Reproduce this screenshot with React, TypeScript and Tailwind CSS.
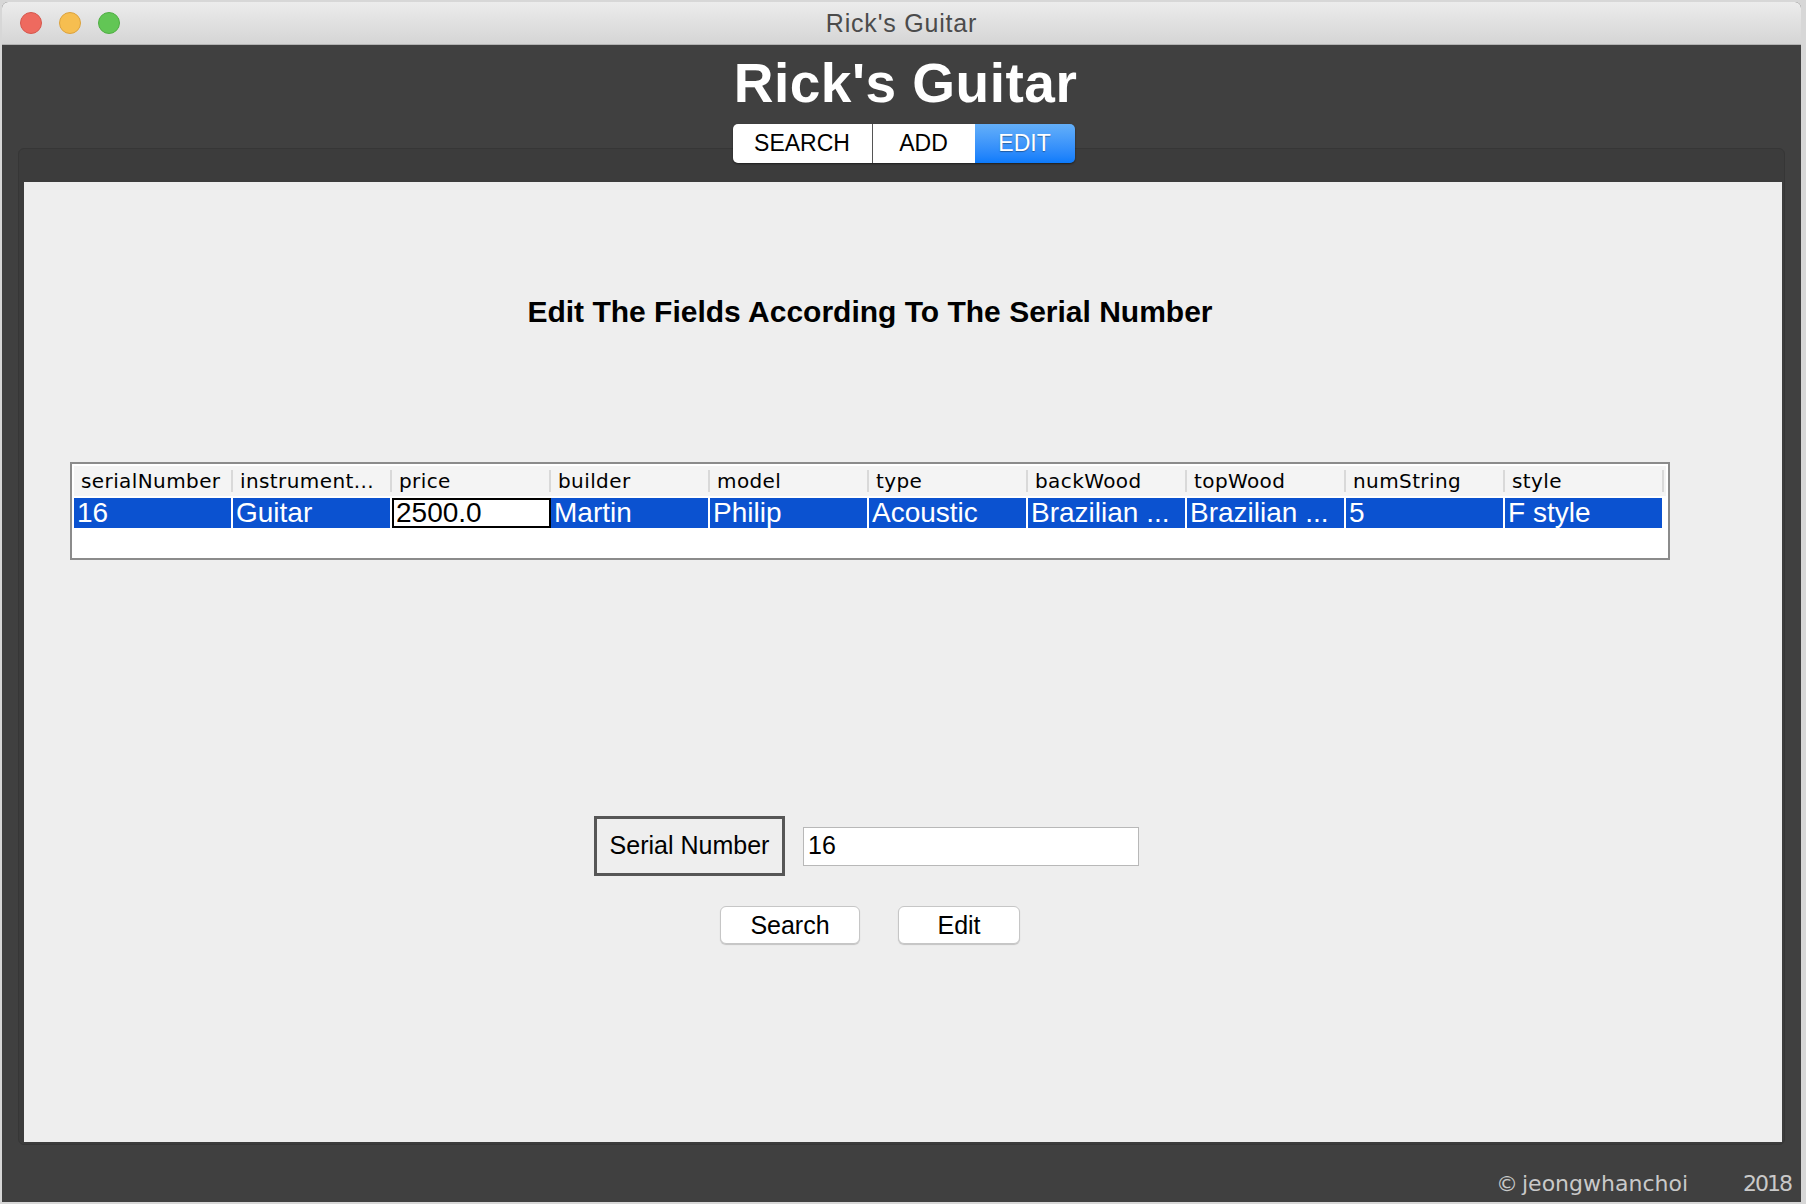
import React from "react";

const columns = [
  "serialNumber",
  "instrument...",
  "price",
  "builder",
  "model",
  "type",
  "backWood",
  "topWood",
  "numString",
  "style",
];

const row = [
  "16",
  "Guitar",
  "2500.0",
  "Martin",
  "Philip",
  "Acoustic",
  "Brazilian ...",
  "Brazilian ...",
  "5",
  "F style",
];

function TitleBar() {
  return (
    <div className="relative h-[43px] shrink-0 bg-gradient-to-b from-[#ececec] to-[#d5d5d5] border-b border-[#b3b3b3] flex items-center justify-center">
      <div className="absolute left-[18px] top-[10px] flex gap-[17px]">
        <span className="w-[22px] h-[22px] rounded-full bg-[#ee6a5f] border border-[#d6574d]" />
        <span className="w-[22px] h-[22px] rounded-full bg-[#f6be50] border border-[#dca23c]" />
        <span className="w-[22px] h-[22px] rounded-full bg-[#62c655] border border-[#4fae43]" />
      </div>
      <span className="text-[25px] tracking-[0.8px] text-[#4b4b4b] leading-[43px]">
        Rick's Guitar
      </span>
    </div>
  );
}

function Tabs() {
  return (
    <div className="relative z-10 mt-[11px] flex justify-center pl-[4px]">
      <div className="flex h-[39px] rounded-[5px] shadow-[0_1px_2px_rgba(0,0,0,0.5)]">
        <div className="w-[140px] bg-white rounded-l-[5px] border-r border-[#555] flex items-center justify-center text-[23px] text-black">
          SEARCH
        </div>
        <div className="w-[102px] bg-white flex items-center justify-center text-[23px] text-black">
          ADD
        </div>
        <div className="w-[100px] rounded-r-[5px] bg-gradient-to-b from-[#63aff9] to-[#0b7bfb] flex items-center justify-center text-[23px] text-white [text-shadow:0_1px_1px_rgba(0,0,0,0.35)]">
          EDIT
        </div>
      </div>
    </div>
  );
}

function InventoryTable() {
  return (
    <div className="mt-[134px] w-[1600px] h-[98px] border-2 border-[#8b8b8b] bg-white p-[2px]">
      <div className="grid grid-cols-[repeat(10,159px)] h-[30px] bg-[#f4f4f4] font-['DejaVu_Sans',sans-serif] text-[20px] tracking-[0.4px] text-black">
        {columns.map((c) => (
          <div key={c} className="flex items-center">
            <span className="flex-1 pl-[7px] leading-[30px] whitespace-nowrap overflow-hidden">
              {c}
            </span>
            <span className="w-[2px] h-[22px] bg-[#d9d9d9]" />
          </div>
        ))}
      </div>
      <div className="mt-[2px] grid grid-cols-[repeat(10,159px)] h-[30px] text-[28px] leading-[30px]">
        {row.map((v, i) =>
          i === 2 ? (
            <div key={i} className="border-2 border-black bg-white text-black pl-[2px] leading-[26px] whitespace-nowrap overflow-hidden">
              {v}
            </div>
          ) : (
            <div key={i} className="bg-[#0b52d0] text-white pl-[3px] border-r-2 border-white whitespace-nowrap overflow-hidden">
              {v}
            </div>
          )
        )}
      </div>
    </div>
  );
}

function SerialForm() {
  return (
    <>
      <div className="mt-[256px] flex items-center gap-[18px] pr-[7px]">
        <div className="w-[191px] h-[60px] border-[3px] border-[#565656] bg-[#eeeeee] flex items-center justify-center text-[25px] text-black">
          Serial Number
        </div>
        <div className="w-[336px] h-[39px] bg-white border border-[#b8b8b8] pl-[4px] flex items-center text-[25px] text-black">
          16
        </div>
      </div>
      <div className="mt-[30px] flex gap-[38px]">
        <button className="w-[140px] h-[38px] rounded-[6px] bg-white border border-[#c6c6c6] shadow-[0_1px_1px_rgba(0,0,0,0.18)] text-[25px] text-black">
          Search
        </button>
        <button className="w-[122px] h-[38px] rounded-[6px] bg-white border border-[#c6c6c6] shadow-[0_1px_1px_rgba(0,0,0,0.18)] text-[25px] text-black">
          Edit
        </button>
      </div>
    </>
  );
}

export default function App() {
  return (
    <div className="w-[1806px] h-[1204px] bg-[#d7d7d7] pt-[2px] pl-[2px] overflow-hidden font-['Liberation_Sans',Arial,sans-serif]">
      <div className="w-[1799px] h-[1200px] flex flex-col rounded-t-[6px] overflow-hidden bg-[#404040]">
        <TitleBar />

        <h1 className="mt-[8px] pl-[8px] text-center text-[55px] leading-[60px] font-bold tracking-[0.5px] text-white">
          Rick's Guitar
        </h1>

        <Tabs />

        <div className="mx-[16px] -mt-[15px] pt-[33px] pl-[5px] pr-[2px] pb-[2px] rounded-[6px] bg-[#3c3c3c] border border-[#363636]">
          <div className="h-[960px] bg-[#eeeeee]">
            <div className="w-[1692px] flex flex-col items-center">
              <h2 className="mt-[114px] text-[30px] leading-[32px] font-bold text-black">
                Edit The Fields According To The Serial Number
              </h2>
              <InventoryTable />
              <SerialForm />
            </div>
          </div>
        </div>

        <div className="mt-[26px] flex justify-end items-center pr-[10px] font-['DejaVu_Sans',sans-serif] text-[22px] leading-[26px] text-[#c9c9c9]">
          <span>©</span>
          <span className="ml-[4px]">jeongwhanchoi</span>
          <span className="ml-[55px] tracking-[-2px]">2018</span>
        </div>
      </div>
    </div>
  );
}
